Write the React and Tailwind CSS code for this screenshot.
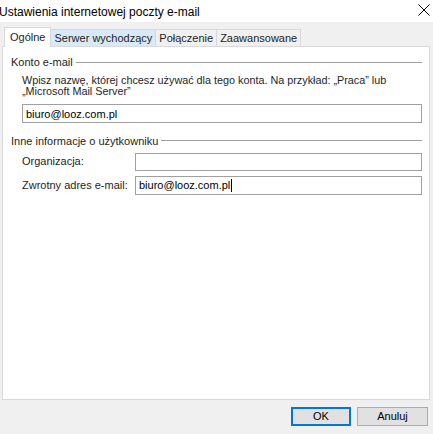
import { useState } from 'react';

const font = { fontFamily: '"Liberation Sans", Arial, sans-serif' };

function GroupTitle({ children }) {
  return (
    <div className="flex items-center gap-[3px] h-[12px] pl-[8px] pr-[7px]">
      <span className="text-[11px] leading-[12px] text-[#1e1e1e] whitespace-nowrap">{children}</span>
      <div className="flex-1 h-px bg-[#a0a0a0]" />
    </div>
  );
}

function Tab({ label, active, hover }) {
  if (active) {
    return (
      <div className="h-[20px] px-[5px] flex items-center bg-white border border-b-0 border-[#d9d9d9] -mb-px relative z-10 text-[11px] text-[#1e1e1e]">
        {label}
      </div>
    );
  }
  return (
    <div
      className={
        'h-[17px] px-[3px] flex items-center border border-l-0 border-b-0 text-[11px] text-[#1e1e1e] ' +
        (hover ? 'bg-[#d8eaf9] border-[#c2dcf2]' : 'bg-[#f0f0f0] border-[#d9d9d9]')
      }
    >
      {label}
    </div>
  );
}

export default function App() {
  const [name, setName] = useState('biuro@looz.com.pl');
  const [org, setOrg] = useState('');
  const [reply, setReply] = useState('biuro@looz.com.pl');

  return (
    <div className="w-[433px] h-[434px] bg-[#f0f0f0] flex flex-col overflow-hidden" style={font}>
      {/* title bar */}
      <div className="h-[22px] bg-white flex items-center justify-between shrink-0">
        <span className="text-[12px] text-black -ml-[1px] leading-none pt-[1px]">Ustawienia internetowej poczty e-mail</span>
        <svg width="12" height="12" viewBox="0 0 12 12" className="mr-[3px] mb-[2px]">
          <path d="M0.5 0.5L11.5 11.5M11.5 0.5L0.5 11.5" stroke="#000" strokeWidth="1" />
        </svg>
      </div>

      {/* tabs */}
      <div className="flex items-end pl-[4px] h-[24px] shrink-0">
        <Tab label="Ogólne" active />
        <Tab label="Serwer wychodzący" hover />
        <Tab label="Połączenie" />
        <Tab label="Zaawansowane" />
      </div>

      {/* panel */}
      <div className="ml-[2px] mr-[3px] h-[354px] bg-white border border-[#d9d9d9] shrink-0 pt-[9px]">
        <GroupTitle>Konto e-mail</GroupTitle>
        <div className="pl-[19px] pr-[7px] mt-[7px]">
          <p className="text-[10.8px] leading-[11px] text-[#1e1e1e]">
            Wpisz nazwę, której chcesz używać dla tego konta. Na przykład: „Praca” lub
            <br />
            „Microsoft Mail Server”
          </p>
          <input
            value={name}
            onChange={e => setName(e.target.value)}
            className="mt-[7px] w-full h-[19px] border border-[#a0a0a0] px-[3px] text-[11px] text-black outline-none"
            style={font}
          />
        </div>

        <div className="mt-[10px]">
          <GroupTitle>Inne informacje o użytkowniku</GroupTitle>
        </div>
        <div className="pl-[19px] pr-[7px] mt-[6px] flex flex-col gap-[5px]">
          <div className="flex items-center">
            <span className="w-[113px] text-[11px] text-[#1e1e1e]">Organizacja:</span>
            <input
              value={org}
              onChange={e => setOrg(e.target.value)}
              className="flex-1 h-[18px] border border-[#a0a0a0] px-[3px] text-[11px] outline-none"
              style={font}
            />
          </div>
          <div className="flex items-center">
            <span className="w-[113px] text-[11px] text-[#1e1e1e]">Zwrotny adres e-mail:</span>
            <div className="flex-1 h-[19px] border border-[#a0a0a0] px-[3px] flex items-center">
              <input
                value={reply}
                onChange={e => setReply(e.target.value)}
                className="w-auto max-w-[92px] text-[11px] outline-none"
                size={17}
                style={font}
              />
              <span className="w-px h-[13px] bg-black" />
            </div>
          </div>
        </div>
      </div>

      {/* buttons */}
      <div className="flex justify-end gap-[6px] pr-[5px] pt-[7px]">
        <button className="w-[60px] h-[19px] bg-[#e1e1e1] border-2 border-[#0078d7] text-[11px] text-black leading-none" style={font}>
          OK
        </button>
        <button className="w-[71px] h-[19px] bg-[#e1e1e1] border border-[#adadad] text-[11px] text-black leading-none" style={font}>
          Anuluj
        </button>
      </div>
    </div>
  );
}
